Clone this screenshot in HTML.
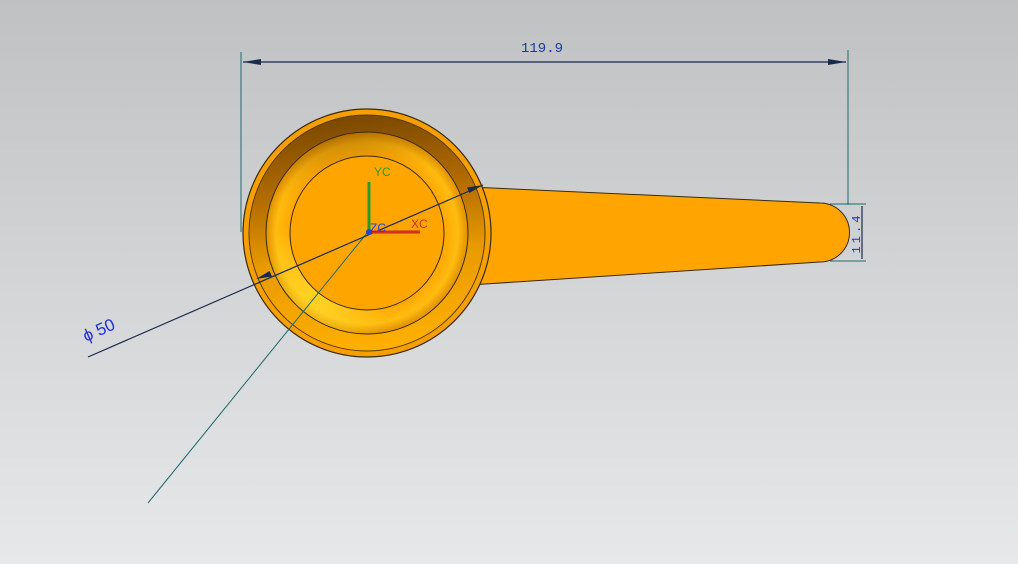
<!DOCTYPE html>
<html><head><meta charset="utf-8"><style>
html,body{margin:0;padding:0;width:1018px;height:564px;overflow:hidden;}
</style></head><body>
<svg width="1018" height="564" viewBox="0 0 1018 564" xmlns="http://www.w3.org/2000/svg" font-family="Liberation Sans, sans-serif">
<defs>
<linearGradient id="bg" x1="0" y1="0" x2="0" y2="1">
<stop offset="0" stop-color="#bfc1c3"/><stop offset="1" stop-color="#e7e8ea"/>
</linearGradient>
<linearGradient id="wallg" x1="0.45" y1="0" x2="0.55" y2="1">
<stop offset="0" stop-color="#7a4800"/><stop offset="0.35" stop-color="#b87000"/><stop offset="0.6" stop-color="#e89a00"/><stop offset="1" stop-color="#ffb000"/>
</linearGradient>
<radialGradient id="floorg" cx="0.5" cy="0.5" r="0.5">
<stop offset="0.75" stop-color="#ffa500"/><stop offset="0.9" stop-color="#ffbc10"/><stop offset="1" stop-color="#e09000"/>
</radialGradient>
<linearGradient id="floorshade" x1="0.4" y1="0" x2="0.6" y2="1">
<stop offset="0" stop-color="#8a5200" stop-opacity="0.6"/><stop offset="0.3" stop-color="#ffa500" stop-opacity="0"/><stop offset="1" stop-color="#ffa500" stop-opacity="0"/>
</linearGradient>
<radialGradient id="hl" cx="0.3" cy="0.75" r="0.35">
<stop offset="0" stop-color="#ffe030" stop-opacity="0.9"/><stop offset="1" stop-color="#ffe030" stop-opacity="0"/>
</radialGradient>
</defs>
<rect width="1018" height="564" fill="url(#bg)"/>
<path d="M470 187 L820 203 A29.5 29.5 0 0 1 820 262 L470 285 Z" fill="#ffa400" stroke="#3a2a10" stroke-width="1"/>
<circle cx="367" cy="233" r="124" fill="#f5a000" stroke="#3a2a10" stroke-width="1.2"/>
<circle cx="367" cy="233" r="118" fill="url(#wallg)" stroke="#5a3a00" stroke-width="1"/>
<circle cx="367" cy="233" r="101" fill="url(#floorg)"/>
<circle cx="367" cy="233" r="101" fill="url(#floorshade)"/>
<circle cx="367" cy="233" r="101" fill="url(#hl)" stroke="#3a2a10" stroke-width="1"/>
<circle cx="367" cy="233" r="77" fill="#ffa500" stroke="#3a2a10" stroke-width="1"/>
<g stroke="#1f6b6b" stroke-width="1" fill="none">
<line x1="241" y1="52" x2="241" y2="232"/>
<line x1="848" y1="50" x2="848" y2="205"/>
<line x1="830" y1="204" x2="866" y2="204"/>
<line x1="830" y1="261" x2="866" y2="261"/>
<line x1="148" y1="503" x2="367" y2="233"/>
</g>
<g stroke="#1a2a4a" stroke-width="1.2" fill="none">
<line x1="243" y1="62" x2="846" y2="62"/>
<line x1="862" y1="206" x2="862" y2="259"/>
<line x1="88" y1="357" x2="483" y2="185"/>
</g>
<g fill="#1a2a4a">
<polygon points="243,62 261,59 261,65"/>
<polygon points="846,62 828,59 828,65"/>
<polygon points="483,185 467,187.5 469.5,193"/>
<polygon points="256,279 272,276.5 269.5,271"/>
</g>
<text x="521" y="52" font-size="14" fill="#1a3aa0" font-family="Liberation Mono, monospace">119.9</text>
<text transform="translate(860,233) rotate(-90)" text-anchor="middle" font-size="12" fill="#1530e0" letter-spacing="3" font-family="Liberation Mono, monospace">11.4</text>
<text transform="translate(86,342) rotate(-24)" font-size="17" fill="#2030e0">ϕ 50</text>
<line x1="369" y1="232" x2="369" y2="182" stroke="#2a9a2a" stroke-width="3"/>
<line x1="369" y1="232" x2="420" y2="232" stroke="#d03020" stroke-width="3"/>
<circle cx="369" cy="232" r="3" fill="#2040e0"/>
<text x="374" y="176" font-size="12" fill="#2a9a2a">YC</text>
<text x="411" y="228" font-size="12" fill="#d03020">XC</text>
<text x="370" y="232" font-size="12" fill="#2040e0">ZC</text>
</svg>
</body></html>
